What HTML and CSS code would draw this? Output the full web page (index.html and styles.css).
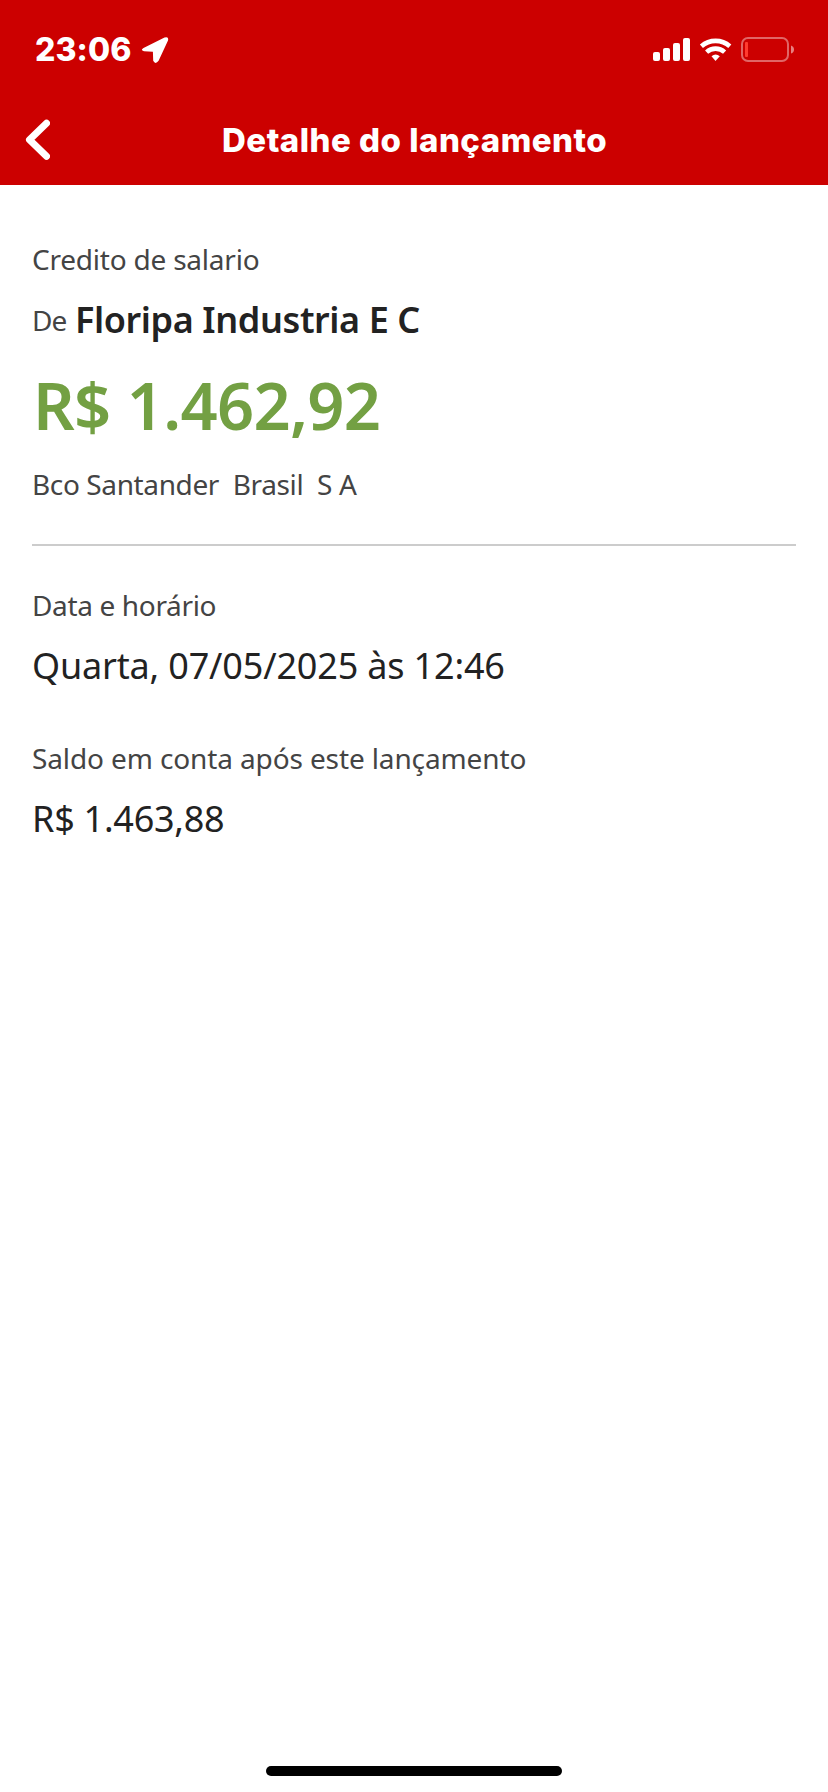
FILE: index.html
```html
<!DOCTYPE html>
<html lang="pt-BR">
<head>
<meta charset="utf-8">
<title>Detalhe do lançamento</title>
<link rel="stylesheet" href="styles.css">
</head>
<body>
<div class="screen">
  <header class="header">
    <div class="status">
      <span class="time">23:06</span>
      <svg class="location" width="28" height="28" viewBox="0 0 28 28"><path d="M2.5 12 23.5 1.5Q28 0 27 4.5L17.6 24.8Q14.3 29 12.2 24.8L11.9 15.7 3 15.3Q-1 14 2.5 12Z"/></svg>
      <svg class="indicators" width="142" height="26" viewBox="0 0 142 26">
        <g fill="#fff">
          <rect x="0" y="15" width="7" height="9" rx="2"/>
          <rect x="10" y="11" width="7" height="13" rx="2"/>
          <rect x="20" y="6" width="7" height="18" rx="2"/>
          <rect x="30" y="1" width="7" height="23" rx="2"/>
          <path d="M58.5 19.3 62.5 24 66.8 19.3A6.5 6.5 0 0 0 58.5 19.3Z"/>
        </g>
        <g fill="none" stroke="#fff" stroke-width="4.6">
          <path d="M48.4 9.2A21.5 21.5 0 0 1 76.8 9.2"/>
          <path d="M53.6 15.1A13.4 13.4 0 0 1 71.6 15.1"/>
        </g>
        <rect x="89" y="1" width="46" height="23" rx="6" fill="none" stroke="#e06666" stroke-width="2"/>
        <path d="M138 8.5Q141 9.5 141 12.5T138 16.5Z" fill="#e88080"/>
        <rect x="92" y="5" width="3" height="15" rx="1" fill="#ff3b30"/>
      </svg>
    </div>
    <div class="navbar">
      <svg class="back" width="26" height="42" viewBox="0 0 26 42"><path d="M22.5 4.3 5.5 20.8 22.5 37.3"/></svg>
      <h1 class="title">Detalhe do lançamento</h1>
    </div>
  </header>
  <main class="content">
    <section class="summary">
      <p class="label kind">Credito de salario</p>
      <p class="sender"><span class="label from">De</span><strong class="name">Floripa Industria E C</strong></p>
      <p class="amount">R$ 1.462,92</p>
      <p class="label bank">Bco Santander  Brasil  S A</p>
    </section>
    <section class="field date">
      <p class="label date-label">Data e horário</p>
      <p class="value date-value">Quarta, 07/05/2025 às 12:46</p>
    </section>
    <section class="field balance">
      <p class="label balance-label">Saldo em conta após este lançamento</p>
      <p class="value balance-value">R$ 1.463,88</p>
    </section>
  </main>
  <footer class="footer"><div class="home"></div></footer>
</div>
</body>
</html>
```

FILE: styles.css
```css
* { box-sizing: border-box; }
body, p, h1 { margin: 0; }
body { background: #fff; font-family: "Noto Sans", sans-serif; }
.screen { width: 828px; height: 1792px; display: flex; flex-direction: column; }
.header { height: 185px; background: #c00; color: #fff; font-family: Inter, sans-serif; font-weight: 800; }
.status { height: 98px; padding: 30px 33px 0 35px; display: flex; align-items: flex-start; }
.time { width: 105px; font-size: 32px; line-height: 40px; letter-spacing: .1px; white-space: nowrap; }
.location { margin: 6px 0 0 1px; fill: #fff; }
.indicators { margin: 7px 0 0 auto; }
.navbar { height: 84px; padding-left: 24px; display: grid; grid-template-columns: 26px 1fr; }
.back { margin-top: 21px; fill: none; stroke: #fff; stroke-width: 7; stroke-linecap: round; stroke-linejoin: round; }
.title { margin: 22px 0 0 172px; font-size: 33px; font-weight: 800; line-height: 40px; letter-spacing: .48px; white-space: nowrap; }
.content { flex: 1; padding: 54px 32px 0; }
.label { font-size: 28px; line-height: 40px; color: #444; white-space: pre; }
.kind { letter-spacing: -.22px; }
.summary { height: 307px; border-bottom: 2px solid #ccc; }
.sender { height: 48px; margin-top: 17px; display: flex; align-items: flex-start; }
.from { width: 43px; padding-top: 4px; letter-spacing: -1px; }
.name { font-size: 36px; line-height: 48px; font-weight: 600; color: #222; letter-spacing: -.4px; white-space: nowrap; }
.amount { margin-top: 21px; padding-left: 1px; font-size: 65px; line-height: 80px; font-weight: 600; color: #73a043; letter-spacing: -.7px; white-space: nowrap; }
.bank { margin-top: 19px; letter-spacing: -.38px; }
.value { margin-top: 17px; font-size: 36px; line-height: 48px; color: #222; white-space: nowrap; }
.date { padding-top: 39px; }
.date-label { letter-spacing: -.35px; }
.date-value { letter-spacing: -.17px; }
.balance { padding-top: 48px; }
.balance-label { letter-spacing: -.12px; }
.balance-value { letter-spacing: -.25px; }
.footer { height: 26px; display: flex; justify-content: center; }
.home { width: 296px; height: 10px; border-radius: 5px; background: #000; }
```
